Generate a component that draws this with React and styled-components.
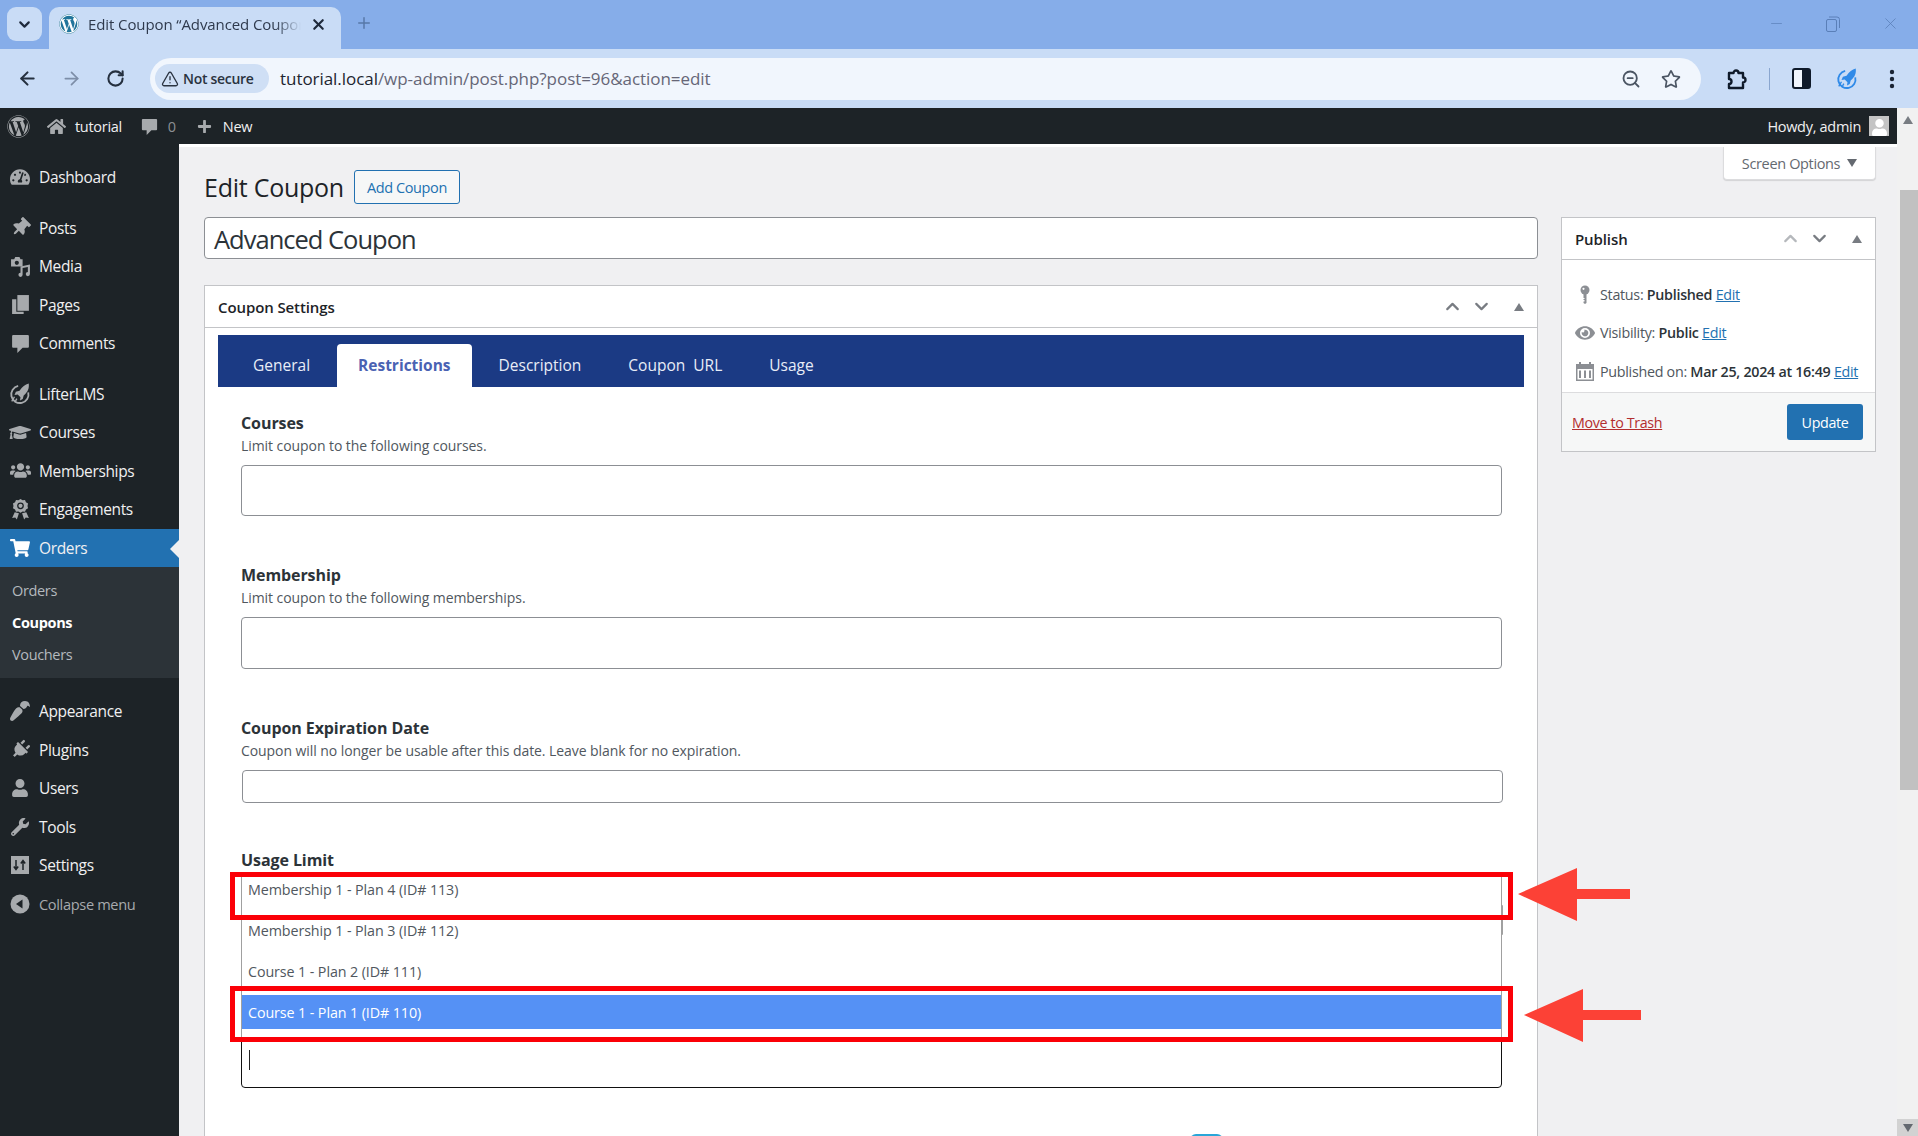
import React from 'react';
import styled, { createGlobalStyle } from 'styled-components';
import {
  FaWordpress, FaHome, FaPlus, FaThumbtack, FaTachometerAlt, FaGraduationCap,
  FaUsers, FaShoppingCart, FaPaintBrush, FaPlug, FaUser, FaWrench, FaEye, FaRegStar,
} from 'react-icons/fa';
import { ArrowLeft, ArrowRight, RotateCw, ChevronDown, ChevronUp, X, Plus, Minus, ZoomOut, TriangleAlert } from 'lucide-react';

const FONT = '"Open Sans", "Noto Sans", "Liberation Sans", sans-serif';

const GlobalStyle = createGlobalStyle`
  html, body { margin: 0; padding: 0; height: 100%; overflow: hidden; background: #f0f0f1; }
  * { box-sizing: border-box; }
  body { font-family: ${FONT}; color: #3c434a; }
`;

const Page = styled.div`
  width: 1918px;
  height: 1136px;
  display: flex;
  flex-direction: column;
  overflow: hidden;
  position: relative;
`;

/* browser chrome */
const TabStrip = styled.div`
  height: 49px;
  flex: none;
  background: #86ade9;
  display: flex;
  align-items: flex-end;
  padding-left: 7px;
  position: relative;
`;
const TabSearch = styled.div`
  width: 35px;
  height: 34px;
  margin-bottom: 8px;
  border-radius: 9px;
  background: #c9dcf6;
  color: #1f2a3c;
  display: flex;
  align-items: center;
  justify-content: center;
`;
const BrowserTab = styled.div`
  width: 292px;
  height: 42px;
  margin-left: 7px;
  background: #c9dcf6;
  border-radius: 10px 10px 0 0;
  display: flex;
  align-items: center;
  padding: 0 14px 8px 10px;
  gap: 9px;
  color: #2f3a4d;
`;
const TabIcon = styled.span`
  display: flex;
  color: #21759b;
  background: #fff;
  border-radius: 50%;
`;
const TabTitle = styled.span`
  flex: 1;
  font-size: 15px;
  letter-spacing: -0.1px;
  white-space: nowrap;
  overflow: hidden;
  -webkit-mask-image: linear-gradient(to right, #000 88%, transparent);
`;
const NewTab = styled.div`
  margin: 0 0 17px 14px;
  color: #5778a8;
  display: flex;
  align-self: flex-end;
`;
const WindowControls = styled.div`
  margin-left: auto;
  display: flex;
  align-items: center;
  gap: 41px;
  padding: 0 18px 16px 0;
  color: #5a7fb8;
`;
const Toolbar = styled.div`
  height: 59px;
  flex: none;
  background: #c9dcf6;
  display: flex;
  align-items: center;
  padding-left: 5px;
  color: #1f2a3c;
`;
const NavButton = styled.span`
  width: 44px;
  display: flex;
  justify-content: center;
  color: ${p => (p.$muted ? '#7d8ea8' : '#25303f')};
`;
const Omnibox = styled.div`
  width: 1551px;
  height: 42px;
  margin-left: 13px;
  background: #f1f6fd;
  border-radius: 21px;
  display: flex;
  align-items: center;
  padding: 0 20px 0 5px;
`;
const SecureChip = styled.div`
  width: 114px;
  height: 29px;
  background: #cfdff5;
  border-radius: 15px;
  display: flex;
  align-items: center;
  gap: 4px;
  padding-left: 6px;
  font-size: 14px;
  font-weight: 600;
  letter-spacing: -0.3px;
  white-space: nowrap;
  color: #2a3340;
`;
const Url = styled.div`
  margin-left: 11px;
  flex: 1;
  font-size: 17px;
  letter-spacing: -0.05px;
  color: #667;
  b { font-weight: 400; color: #1d2530; }
`;
const OmniIcons = styled.div`
  display: flex;
  align-items: center;
  gap: 20px;
  color: #4b5563;
`;
const ToolIcons = styled.div`
  display: flex;
  align-items: center;
  margin-left: 23px;
`;
const Divider = styled.span`
  width: 1px;
  height: 22px;
  margin: 0 22px 0 21px;
  background: #8aa6cf;
`;
const ToolSpacer = styled.span`
  width: ${p => p.$w}px;
`;

/* wp */
const AdminBar = styled.div`
  height: 36px;
  flex: none;
  width: 1898px;
  background: #1d2327;
  color: #f0f0f1;
  display: flex;
  align-items: center;
  font-size: 14.5px;
  letter-spacing: -0.3px;
  padding: 0 9px 0 7px;
`;
const BarItem = styled.span`
  display: flex;
  align-items: center;
  gap: ${p => p.$gap || 8}px;
  margin-left: ${p => (p.$push ? 'auto' : `${p.$ml || 0}px`)};
  color: ${p => (p.$muted ? '#8c8f94' : 'inherit')};
  svg { color: #a7aaad; }
`;
const Avatar = styled.span`
  width: 20px;
  height: 20px;
  background: #c4c4c4;
  display: flex;
  align-items: flex-end;
  justify-content: center;
  overflow: hidden;
  & svg { color: #fff; }
`;
const Body = styled.div`
  flex: 1;
  display: flex;
  min-height: 0;
`;
const Sidebar = styled.nav`
  width: 179px;
  flex: none;
  background: #1d2327;
  padding-top: 14px;
`;
const MenuRow = styled.div`
  height: 38.5px;
  display: flex;
  align-items: center;
  padding-left: 9px;
  gap: 8px;
  margin-top: ${p => (p.$sep ? 12 : 0)}px;
  font-size: ${p => (p.$muted ? 14.6 : 15.5)}px;
  letter-spacing: -0.35px;
  color: ${p => (p.$muted ? '#a7aaad' : '#f0f0f1')};
  background: ${p => (p.$active ? '#2271b1' : 'transparent')};
  position: relative;
  &::after {
    content: ${p => (p.$active ? '""' : 'none')};
    position: absolute;
    right: 0;
    top: 11px;
    border: 9px solid transparent;
    border-right-color: #f0f0f1;
    border-left-width: 0;
  }
`;
const MenuIcon = styled.span`
  width: 22px;
  height: 22px;
  flex: none;
  display: flex;
  align-items: center;
  justify-content: center;
  color: ${p => (p.$active ? '#fff' : '#a7aaad')};
`;
const SubMenu = styled.div`
  background: #2c3338;
  padding: 7px 0 7px;
  margin-bottom: 14px;
`;
const SubItem = styled.div`
  height: 32.3px;
  display: flex;
  align-items: center;
  padding-left: 12px;
  font-size: 14.5px;
  letter-spacing: -0.35px;
  color: ${p => (p.$current ? '#fff' : '#b4b9be')};
  font-weight: ${p => (p.$current ? 700 : 400)};
`;
const Content = styled.main`
  flex: 1;
  min-width: 0;
  border-top: 3px solid #fff;
  background: #f0f0f2;
  padding: 0 21px 0 25px;
  display: flex;
  flex-direction: column;
  position: relative;
  overflow: hidden;
`;
const ScreenOptions = styled.div`
  align-self: flex-end;
  flex: none;
  width: 153px;
  height: 33px;
  background: #fff;
  border: 1px solid #dcdcde;
  border-top: none;
  border-radius: 0 0 4px 4px;
  box-shadow: 0 1px 1px rgba(0, 0, 0, 0.12);
  display: flex;
  align-items: center;
  justify-content: center;
  gap: 7px;
  font-size: 14.5px;
  letter-spacing: -0.35px;
  color: #646970;
`;
const DownTri = styled.span`
  width: 0;
  height: 0;
  border-left: 5px solid transparent;
  border-right: 5px solid transparent;
  border-top: 8px solid #646970;
`;
const UpTri = styled.span`
  width: 0;
  height: 0;
  border-left: 5px solid transparent;
  border-right: 5px solid transparent;
  border-bottom: 8px solid #787c82;
`;
const Columns = styled.div`
  display: flex;
  flex: none;
  gap: 23px;
  align-items: flex-start;
`;
const MainCol = styled.div`
  width: 1334px;
  flex: none;
`;
const SideCol = styled.div`
  width: 315px;
  flex: none;
  margin-top: 37px;
`;
const HeadingRow = styled.div`
  height: 34px;
  margin-top: -10px;
  display: flex;
  align-items: center;
  gap: 10px;
`;
const Heading = styled.h1`
  margin: 0;
  font-size: 25px;
  font-weight: 400;
  letter-spacing: -0.25px;
  color: #1d2327;
`;
const AddButton = styled.span`
  width: 106px;
  height: 34px;
  border: 1px solid #2271b1;
  border-radius: 3px;
  background: #f6f7f7;
  color: #2271b1;
  font-size: 14.5px;
  letter-spacing: -0.4px;
  display: flex;
  align-items: center;
  justify-content: center;
`;
const TitleInput = styled.div`
  margin-top: 13px;
  height: 42px;
  background: #fff;
  border: 1px solid #8c8f94;
  border-radius: 4px;
  padding: 1px 0 0 9px;
  display: flex;
  align-items: center;
  font-size: 25.5px;
  letter-spacing: -1px;
  color: #2c3338;
`;
const Postbox = styled.section`
  background: #fff;
  border: 1px solid #c3c4c7;
  margin-top: ${p => p.$mt || 0}px;
`;
const BoxHeader = styled.div`
  height: 42px;
  display: flex;
  align-items: center;
  padding: 0 12px 0 13px;
  border-bottom: 1px solid #c3c4c7;
`;
const BoxTitle = styled.h2`
  margin: 0;
  flex: 1;
  font-size: 15px;
  font-weight: 600;
  letter-spacing: -0.1px;
  color: #1d2327;
`;
const BoxControls = styled.div`
  display: flex;
  align-items: center;
  color: #787c82;
  gap: 8px;
  ${UpTri} { margin-left: 14px; margin-right: 1px; }
`;
const TabBar = styled.div`
  height: 52px;
  margin: 7px 13px 0;
  background: #1b3a84;
  display: flex;
  align-items: flex-end;
  padding-left: 11.5px;
`;
const SettingTab = styled.div`
  height: 43px;
  padding: 0 ${p => (p.$active ? 21 : 23.5)}px 2px;
  margin: 0 ${p => (p.$active ? 3.5 : 0)}px;
  border-radius: 4px 4px 0 0;
  background: ${p => (p.$active ? '#fff' : 'transparent')};
  color: ${p => (p.$active ? '#4a62b3' : '#e8edf7')};
  font-weight: ${p => (p.$active ? 700 : 400)};
  font-size: 15.5px;
  letter-spacing: 0;
  word-spacing: 4px;
  display: flex;
  align-items: center;
`;
const Fields = styled.div`
  padding: 25px 35px 0 36px;
  height: 770px;
  position: relative;
`;
const Field = styled.div`
  margin-bottom: ${p => p.$mb || 48}px;
`;
const Label = styled.div`
  font-size: 16px;
  font-weight: 700;
  letter-spacing: -0.08px;
  line-height: 23px;
  color: #2c3338;
`;
const Help = styled.div`
  font-size: 14px;
  letter-spacing: -0.07px;
  line-height: 22px;
  color: #50575e;
`;
const TextBox = styled.div`
  margin-top: 8px;
  height: ${p => p.$h}px;
  background: #fff;
  border: 1px solid #8c8f94;
  border-radius: 4px;
  margin-left: ${p => (p.$shift ? 1 : 0)}px;
  margin-right: ${p => (p.$shift ? -1 : 0)}px;
`;
const ListBox = styled.div`
  border-left: 1px solid #a0a0a0;
  border-right: 1px solid #a0a0a0;
  height: 165px;
  position: relative;
  &::after {
    content: "";
    position: absolute;
    right: -2px;
    top: 33px;
    width: 2px;
    height: 30px;
    background: #a0a0a0;
    border-radius: 1px;
  }
`;
const ListItem = styled.div`
  height: ${p => (p.$selected ? 34 : 41)}px;
  padding: ${p => (p.$selected ? 0 : 8)}px 0 0 6px;
  display: flex;
  align-items: ${p => (p.$selected ? 'center' : 'flex-start')};
  font-size: 14.3px;
  letter-spacing: -0.1px;
  background: ${p => (p.$selected ? '#5591f5' : 'transparent')};
  color: ${p => (p.$selected ? '#fff' : '#50575e')};
`;
const SearchBox = styled.div`
  height: 51px;
  border: 1px solid #111;
  border-radius: 0 0 4px 4px;
  padding: 12px 0 0 7px;
`;
const Caret = styled.span`
  display: block;
  width: 1px;
  height: 20px;
  background: #222;
`;
const RedBox = styled.div`
  position: absolute;
  left: -11px;
  width: 1283px;
  top: ${p => p.$top}px;
  height: ${p => p.$h}px;
  border: 5px solid #fb0007;
`;
const Arrow = styled.svg`
  position: absolute;
  left: ${p => p.$left}px;
  top: ${p => p.$top}px;
`;
const ListArea = styled.div`
  position: relative;
`;
const BlueNub = styled.div`
  position: absolute;
  left: 985px;
  top: 747px;
  width: 33px;
  height: 6px;
  background: #2aa6d8;
  border-radius: 6px 6px 0 0;
`;
const PublishBody = styled.div`
  padding: 15px 10px 0 12px;
  height: 132px;
`;
const MetaRow = styled.div`
  height: 38.5px;
  display: flex;
  align-items: center;
  gap: 5px;
  font-size: 14.3px;
  letter-spacing: -0.28px;
  white-space: nowrap;
  color: #50575e;
  b { font-weight: 600; color: #2c3338; }
  a { color: #2271b1; text-decoration: underline; }
`;
const MetaIcon = styled.span`
  width: 21px;
  flex: none;
  display: flex;
  justify-content: center;
  color: #8c8f94;
`;
const PublishFooter = styled.div`
  height: 59px;
  padding: 0 12px 0 10px;
  background: #f6f7f7;
  border-top: 1px solid #dcdcde;
  display: flex;
  align-items: center;
  justify-content: space-between;
  font-size: 14.3px;
  letter-spacing: -0.37px;
`;
const TrashLink = styled.a`
  color: #b32d2e;
  text-decoration: underline;
`;
const UpdateButton = styled.span`
  width: 76px;
  height: 36px;
  background: #2271b1;
  border-radius: 3px;
  color: #fff;
  display: flex;
  align-items: center;
  justify-content: center;
`;
const Scrollbar = styled.div`
  width: 21px;
  flex: none;
  margin-top: -36px;
  background: #f1f1f1;
  display: flex;
  flex-direction: column;
  align-items: flex-end;
  position: relative;
  z-index: 2;
`;
const ScrollUp = styled.div`
  height: 24px;
  width: 100%;
  display: flex;
  align-items: center;
  justify-content: center;
`;
const ScrollThumb = styled.div`
  width: 18px;
  height: 600px;
  margin-top: 58px;
  background: #c1c1c1;
`;
const ScrollDown = styled.div`
  margin-top: auto;
  width: 100%;
  height: 17px;
  background: #d2d2d2;
  display: flex;
  align-items: center;
  justify-content: center;
`;
const Tilted = styled.span`
  display: flex;
  transform: rotate(${p => p.$deg}deg);
`;

/* dashicon style drawings */
const MediaIcon = () => (
  <svg width="21" height="21" viewBox="0 0 20 20" fill="currentColor">
    <path d="M1 3h3l1-2h4l1 2h2v7H1z" fillRule="evenodd" />
    <circle cx="6.5" cy="6.5" r="2" fill="#1d2327" />
    <path d="M19 8v9.2a2 2 0 1 1-2-2v-4.7l-5 1v6.4a2 2 0 1 1-2-2v-6z" />
  </svg>
);
const PagesIcon = () => (
  <svg width="21" height="21" viewBox="0 0 20 20" fill="currentColor">
    <path d="M7 1h11v15H7z" />
    <path d="M2 5h4v12h7v2H2z" />
  </svg>
);
const CommentIcon = ({ size = 21 }) => (
  <svg width={size} height={size} viewBox="0 0 20 20" fill="currentColor">
    <path d="M3 2h14a1 1 0 0 1 1 1v10a1 1 0 0 1-1 1h-5l-5 5v-5H3a1 1 0 0 1-1-1V3a1 1 0 0 1 1-1z" />
  </svg>
);
const RocketIcon = ({ size = 24, color = 'currentColor', fill }) => (
  <svg width={size} height={size} viewBox="0 0 24 24">
    <path d="M10 3.2a9.4 9.4 0 1 0 11 7" fill="none" stroke={color} strokeWidth="2" />
    <path d="M21.5 .5c.8 5-1 9.5-5.5 13l-1 4-3 1.5.5-3.5-3-3-3.5.5L7.500 9.500l4-1c3-4.500 6-7 10-8z" fill={fill || color} />
    <path d="M6 15l-3 5M8.500 17l-2 4" stroke={color} strokeWidth="1.500" fill="none" />
  </svg>
);
const RibbonIcon = () => (
  <svg width="21" height="22" viewBox="0 0 20 21" fill="currentColor">
    <path d="M10 1l2 1.200 2.300-.2.900 2.100 2 1.200-.5 2.300.5 2.200-2 1.200-.9 2.100-2.300-.2L10 14l-2-1.100-2.300.2-.9-2.100-2-1.200.5-2.200-.5-2.300 2-1.200.9-2.100 2.300.2z" />
    <circle cx="10" cy="7.500" r="3.200" fill="#1d2327" />
    <circle cx="10" cy="7.500" r="2" />
    <path d="M4.500 13.500L2 19l3-.5 1.500 2 2-6zM15.500 13.500L18 19l-3-.5-1.500 2-2-6z" />
  </svg>
);
const SettingsIcon = () => (
  <svg width="20" height="20" viewBox="0 0 20 20">
    <path d="M1 1h18v18H1z" fill="currentColor" />
    <path d="M6 5v9M3.800 11.500L6 14.500l2.200-3M13 15V6M10.800 8.500L13 5.500l2.200 3" stroke="#1d2327" strokeWidth="1.500" fill="none" />
  </svg>
);
const CollapseIcon = () => (
  <svg width="20" height="20" viewBox="0 0 20 20">
    <circle cx="10" cy="10" r="9.500" fill="currentColor" />
    <path d="M12.500 5.500v9L6 10z" fill="#1d2327" />
  </svg>
);
const PinIcon = () => (
  <svg width="14" height="19" viewBox="0 0 14 19" fill="currentColor">
    <circle cx="7" cy="5" r="4.500" />
    <circle cx="5.500" cy="3.800" r="1.100" fill="#fff" />
    <path d="M5.500 9h3v9l-1.500 1-1.500-1v-1.500h1V15h-1v-1h1v-1h-1z" />
  </svg>
);
const CalendarIcon = () => (
  <svg width="20" height="20" viewBox="0 0 20 20" fill="currentColor">
    <path d="M1 3h3V1h2v2h8V1h2v2h3v17H1zm1.500 5v10.500h15V8z" />
    <path d="M4 9.500h2V17H4zM9 9.500h2V17H9zM14 9.500h2V17h-2z" />
  </svg>
);
const ExtensionIcon = () => (
  <svg width="24" height="24" viewBox="0 0 24 24" fill="none" stroke="#0f1a2a" strokeWidth="2.400" strokeLinejoin="round">
    <path d="M5 6h4.500a2.500 2.500 0 0 1 5 0H19v4.500a2.500 2.500 0 0 1 0 5V21H5v-4a2.500 2.500 0 0 0 0-5z" />
  </svg>
);
const SidePanelIcon = () => (
  <svg width="19" height="21" viewBox="0 0 19 21">
    <rect x="1" y="1" width="17" height="19" rx="2" fill="#f0f5fd" stroke="#0f1a2a" strokeWidth="2" />
    <rect x="10" y="1" width="8" height="19" fill="#0f1a2a" />
  </svg>
);
const RestoreIcon = () => (
  <svg width="14" height="16" viewBox="0 0 14 16" fill="none" stroke="currentColor" strokeWidth="1">
    <rect x=".5" y="3.500" width="10" height="12" rx="1.500" />
    <path d="M3 1h8a2.500 2.500 0 0 1 2.500 2.500V12" />
  </svg>
);
const RedArrow = ({ left, top, end }) => (
  <Arrow $left={left} $top={top} width={end} height="53" viewBox={`0 0 ${end} 53`}>
    <path d={`M0 26L59 0v21h${end - 59}v10H59v22z`} fill="#fc4136" />
  </Arrow>
);

const menuTop = [
  { label: 'Dashboard', icon: <FaTachometerAlt size={20} /> },
  { label: 'Posts', icon: <Tilted $deg={45}><FaThumbtack size={19} /></Tilted>, sep: true },
  { label: 'Media', icon: <MediaIcon /> },
  { label: 'Pages', icon: <PagesIcon /> },
  { label: 'Comments', icon: <CommentIcon /> },
  { label: 'LifterLMS', icon: <RocketIcon />, sep: true },
  { label: 'Courses', icon: <FaGraduationCap size={23} /> },
  { label: 'Memberships', icon: <FaUsers size={21} /> },
  { label: 'Engagements', icon: <RibbonIcon /> },
  { label: 'Orders', icon: <FaShoppingCart size={20} />, active: true },
];
const menuBottom = [
  { label: 'Appearance', icon: <Tilted $deg={180}><FaPaintBrush size={20} /></Tilted> },
  { label: 'Plugins', icon: <Tilted $deg={45}><FaPlug size={19} /></Tilted> },
  { label: 'Users', icon: <FaUser size={18} /> },
  { label: 'Tools', icon: <FaWrench size={18} /> },
  { label: 'Settings', icon: <SettingsIcon /> },
  { label: 'Collapse menu', icon: <CollapseIcon />, muted: true },
];
const tabs = ['General', 'Restrictions', 'Description', 'Coupon URL', 'Usage'];
const plans = [
  'Membership 1 - Plan 4 (ID# 113)',
  'Membership 1 - Plan 3 (ID# 112)',
  'Course 1 - Plan 2 (ID# 111)',
];

function MenuItem({ item }) {
  return (
    <MenuRow $sep={item.sep} $active={item.active} $muted={item.muted}>
      <MenuIcon $active={item.active}>{item.icon}</MenuIcon>
      {item.label}
    </MenuRow>
  );
}

function BoxArrows({ faded }) {
  return (
    <BoxControls>
      <ChevronUp size={21} strokeWidth={2.5} color={faded ? '#b5b8bc' : '#787c82'} />
      <ChevronDown size={21} strokeWidth={2.5} />
      <UpTri />
    </BoxControls>
  );
}

export default function App() {
  return (
    <Page>
      <GlobalStyle />
      <TabStrip>
        <TabSearch><ChevronDown size={17} strokeWidth={3} /></TabSearch>
        <BrowserTab>
          <TabIcon><FaWordpress size={20} /></TabIcon>
          <TabTitle>Edit Coupon “Advanced Coupon</TabTitle>
          <X size={17} strokeWidth={3} color="#1f2a3c" />
        </BrowserTab>
        <NewTab><Plus size={18} /></NewTab>
        <WindowControls>
          <Minus size={17} strokeWidth={1} />
          <RestoreIcon />
          <X size={19} strokeWidth={1} />
        </WindowControls>
      </TabStrip>
      <Toolbar>
        <NavButton><ArrowLeft size={21} strokeWidth={2.4} /></NavButton>
        <NavButton $muted><ArrowRight size={21} strokeWidth={2} /></NavButton>
        <NavButton><RotateCw size={19} strokeWidth={2.6} /></NavButton>
        <Omnibox>
          <SecureChip><TriangleAlert size={18} strokeWidth={1.8} />Not secure</SecureChip>
          <Url><b>tutorial.local</b>/wp-admin/post.php?post=96&amp;action=edit</Url>
          <OmniIcons>
            <ZoomOut size={20} strokeWidth={2.2} />
            <FaRegStar size={20} />
          </OmniIcons>
        </Omnibox>
        <ToolIcons>
          <ExtensionIcon />
          <Divider />
          <SidePanelIcon />
          <ToolSpacer $w={25} />
          <RocketIcon size={22} color="#2f8ae8" />
          <ToolSpacer $w={31} />
          <svg width="6" height="20" viewBox="0 0 6 20" fill="#1a2434">
            <circle cx="3" cy="3" r="2.200" /><circle cx="3" cy="10" r="2.200" /><circle cx="3" cy="17" r="2.200" />
          </svg>
        </ToolIcons>
      </Toolbar>
      <AdminBar>
        <FaWordpress size={23} color="#a7aaad" />
        <BarItem $ml={17} $gap={9}><FaHome size={19} />tutorial</BarItem>
        <BarItem $ml={18} $gap={9} $muted><CommentIcon size={19} />0</BarItem>
        <BarItem $ml={21} $gap={11}><FaPlus size={15} />New</BarItem>
        <BarItem $push>
          Howdy, admin
          <Avatar><FaUser size={17} /></Avatar>
        </BarItem>
      </AdminBar>
      <Body>
        <Sidebar>
          {menuTop.map(item => <MenuItem key={item.label} item={item} />)}
          <SubMenu>
            <SubItem>Orders</SubItem>
            <SubItem $current>Coupons</SubItem>
            <SubItem>Vouchers</SubItem>
          </SubMenu>
          {menuBottom.map(item => <MenuItem key={item.label} item={item} />)}
        </Sidebar>
        <Content>
          <ScreenOptions>Screen Options <DownTri /></ScreenOptions>
          <Columns>
            <MainCol>
              <HeadingRow>
                <Heading>Edit Coupon</Heading>
                <AddButton>Add Coupon</AddButton>
              </HeadingRow>
              <TitleInput>Advanced Coupon</TitleInput>
              <Postbox $mt={26}>
                <BoxHeader>
                  <BoxTitle>Coupon Settings</BoxTitle>
                  <BoxArrows />
                </BoxHeader>
                <TabBar>
                  {tabs.map(t => <SettingTab key={t} $active={t === 'Restrictions'}>{t}</SettingTab>)}
                </TabBar>
                <Fields>
                  <Field>
                    <Label>Courses</Label>
                    <Help>Limit coupon to the following courses.</Help>
                    <TextBox $h={51} />
                  </Field>
                  <Field>
                    <Label>Membership</Label>
                    <Help>Limit coupon to the following memberships.</Help>
                    <TextBox $h={52} />
                  </Field>
                  <Field $mb={46}>
                    <Label>Coupon Expiration Date</Label>
                    <Help>Coupon will no longer be usable after this date. Leave blank for no expiration.</Help>
                    <TextBox $h={33} $shift />
                  </Field>
                  <Label>Usage Limit</Label>
                  <ListArea>
                    <ListBox>
                      {plans.map(p => <ListItem key={p}>{p}</ListItem>)}
                      <ListItem $selected>Course 1 - Plan 1 (ID# 110)</ListItem>
                    </ListBox>
                    <SearchBox><Caret /></SearchBox>
                    <RedBox $top={0} $h={48} />
                    <RedBox $top={114} $h={56} />
                    <RedArrow left={1277} top={-4} end={112} />
                    <RedArrow left={1283} top={117} end={117} />
                  </ListArea>
                  <BlueNub />
                </Fields>
              </Postbox>
            </MainCol>
            <SideCol>
              <Postbox>
                <BoxHeader>
                  <BoxTitle>Publish</BoxTitle>
                  <BoxArrows faded />
                </BoxHeader>
                <PublishBody>
                  <MetaRow><MetaIcon><PinIcon /></MetaIcon><span>Status: <b>Published</b> <a>Edit</a></span></MetaRow>
                  <MetaRow><MetaIcon><FaEye size={20} /></MetaIcon><span>Visibility: <b>Public</b> <a>Edit</a></span></MetaRow>
                  <MetaRow><MetaIcon><CalendarIcon /></MetaIcon><span>Published on: <b>Mar 25, 2024 at 16:49</b> <a>Edit</a></span></MetaRow>
                </PublishBody>
                <PublishFooter>
                  <TrashLink>Move to Trash</TrashLink>
                  <UpdateButton>Update</UpdateButton>
                </PublishFooter>
              </Postbox>
            </SideCol>
          </Columns>
        </Content>
        <Scrollbar>
          <ScrollUp><UpTri /></ScrollUp>
          <ScrollThumb />
          <ScrollDown><DownTri /></ScrollDown>
        </Scrollbar>
      </Body>
    </Page>
  );
}
